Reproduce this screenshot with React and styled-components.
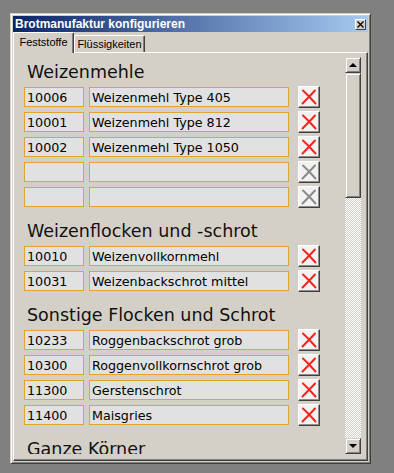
import React from "react";
import styled, { createGlobalStyle } from "styled-components";

const GlobalStyle = createGlobalStyle`
    html, body {
        margin: 0;
        padding: 0;
        background: #808080;
    }
    body {
        font-family: "Liberation Sans", Arial, sans-serif;
    }
`;

const face = "#d4d0c8";

const Window = styled.div`
    box-sizing: border-box;
    width: 361px;
    height: 451px;
    margin: 13px 0 0 10px;
    padding: 2px;
    background: ${face};
    border: 1px solid;
    border-color: ${face} #404040 #404040 ${face};
    box-shadow: inset 1px 1px #fff, inset -1px -1px #808080;
    display: flex;
    flex-direction: column;
`;

const TitleBar = styled.div`
    height: 16px;
    flex: none;
    display: flex;
    align-items: center;
    justify-content: space-between;
    padding: 0 2px 0 2px;
    background: linear-gradient(to right, #0a246a, #a6caf0);
`;

const Title = styled.span`
    color: #fff;
    font-family: "Liberation Sans", Arial, sans-serif;
    font-weight: bold;
    font-size: 12px;
    line-height: 16px;
    white-space: nowrap;
`;

const CloseButton = styled.button`
    box-sizing: border-box;
    width: 11px;
    height: 11px;
    padding: 0;
    display: flex;
    align-items: center;
    justify-content: center;
    background: ${face};
    border: 1px solid;
    border-color: #fff #404040 #404040 #fff;
`;

const TabStrip = styled.div`
    height: 20px;
    flex: none;
    display: flex;
    align-items: flex-end;
`;

const Tab = styled.div`
    box-sizing: border-box;
    height: ${({ active }) => (active ? "21px" : "17px")};
    width: ${({ active }) => (active ? "61px" : "71px")};
    margin-bottom: ${({ active }) => (active ? "-1px" : "0")};
    position: relative;
    z-index: ${({ active }) => (active ? 1 : 0)};
    background: ${face};
    border-top: 1px solid #fff;
    border-left: 1px solid #fff;
    border-right: 1px solid #404040;
    border-radius: 2px 2px 0 0;
    box-shadow: inset -1px 0 #808080;
    display: flex;
    align-items: center;
    justify-content: center;
    padding-bottom: ${({ active }) => (active ? "2px" : "0")};
    font-family: "Liberation Sans", Arial, sans-serif;
    font-size: 11px;
    color: #000;
    white-space: nowrap;
`;

const Panel = styled.div`
    box-sizing: border-box;
    flex: 1;
    min-height: 0;
    padding: 4px 6px 6px 4px;
    background: ${face};
    border: 1px solid;
    border-color: #fff #404040 #404040 #fff;
    box-shadow: inset -1px -1px #808080;
    display: flex;
`;

const ScrollContent = styled.div`
    flex: 1;
    overflow: hidden;
    padding: 3px 0 0 6px;
`;

const Section = styled.section`
    margin-bottom: 12px;
`;

const Heading = styled.h2`
    margin: 0 0 3px 3px;
    height: 24px;
    line-height: 24px;
    font-family: "DejaVu Sans", Verdana, sans-serif;
    font-weight: normal;
    font-size: 17.5px;
    color: #111;
    white-space: nowrap;
`;

const Rows = styled.div`
    display: flex;
    flex-direction: column;
    gap: 5px;
`;

const Row = styled.div`
    display: flex;
    align-items: center;
    height: 20px;
`;

const Field = styled.input`
    box-sizing: border-box;
    width: ${({ wide }) => (wide ? "200px" : "60px")};
    margin-right: ${({ wide }) => (wide ? "9px" : "5px")};
    height: 20px;
    padding: 0 2px;
    border: 1px solid #e0a530;
    background: #e1e1e1;
    font-family: "DejaVu Sans", Verdana, sans-serif;
    font-size: 12.7px;
    color: #000;
    outline: none;
`;

const DeleteButton = styled.button`
    box-sizing: border-box;
    width: 22px;
    height: 22px;
    padding: 0 1px 1px 0;
    display: flex;
    align-items: center;
    justify-content: center;
    background: #f2f2f2;
    border: 1px solid;
    border-color: #fff #404040 #404040 #fff;
    box-shadow: inset -1px -1px #8c8c8c;
`;

const ScrollBar = styled.div`
    width: 16px;
    flex: none;
    display: flex;
    flex-direction: column;
`;

const ScrollButton = styled.div`
    box-sizing: border-box;
    width: 16px;
    height: ${({ thumb }) => (thumb ? "125px" : "16px")};
    flex: none;
    background: ${face};
    border: 1px solid;
    border-color: ${face} #404040 #404040 ${face};
    box-shadow: inset 1px 1px #fff, inset -1px -1px #808080;
    display: flex;
    align-items: center;
    justify-content: center;
`;

const Track = styled.div`
    flex: 1;
    background: repeating-conic-gradient(#fff 0 25%, ${face} 0 50%) 0 0 / 2px 2px;
`;

const Arrow = styled.span`
    width: 0;
    height: 0;
    border-left: 4px solid transparent;
    border-right: 4px solid transparent;
    ${({ down }) =>
        down ? "border-top: 4px solid #000;" : "border-bottom: 4px solid #000;"}
`;

const XIcon = ({ color }) => (
    <svg width="16" height="16" viewBox="0 0 16 16">
        <path
            d="M2 1.5 Q8.5 7.5 14.5 14.5 M14 1.5 Q7.5 8.5 1.5 14.5"
            stroke={color}
            strokeWidth="2"
            fill="none"
            strokeLinecap="round"
        />
    </svg>
);

const sections = [
    {
        title: "Weizenmehle",
        items: [
            ["10006", "Weizenmehl Type 405"],
            ["10001", "Weizenmehl Type 812"],
            ["10002", "Weizenmehl Type 1050"],
            ["", ""],
            ["", ""],
        ],
    },
    {
        title: "Weizenflocken und -schrot",
        items: [
            ["10010", "Weizenvollkornmehl"],
            ["10031", "Weizenbackschrot mittel"],
        ],
    },
    {
        title: "Sonstige Flocken und Schrot",
        items: [
            ["10233", "Roggenbackschrot grob"],
            ["10300", "Roggenvollkornschrot grob"],
            ["11300", "Gerstenschrot"],
            ["11400", "Maisgries"],
        ],
    },
    {
        title: "Ganze Körner",
        items: [
            ["", ""],
            ["", ""],
        ],
    },
];

const App = () => {
    return (
        <>
            <GlobalStyle />
            <Window>
                <TitleBar>
                    <Title>Brotmanufaktur konfigurieren</Title>
                    <CloseButton aria-label="Schließen">
                        <svg width="7" height="7" viewBox="0 0 7 7">
                            <path
                                d="M0.5 0.5 L6.5 6.5 M6.5 0.5 L0.5 6.5"
                                stroke="#000"
                                strokeWidth="1.3"
                            />
                        </svg>
                    </CloseButton>
                </TitleBar>
                <TabStrip>
                    <Tab active>Feststoffe</Tab>
                    <Tab>Flüssigkeiten</Tab>
                </TabStrip>
                <Panel>
                    <ScrollContent>
                        {sections.map((section) => (
                            <Section key={section.title}>
                                <Heading>{section.title}</Heading>
                                <Rows>
                                    {section.items.map(([code, name], i) => (
                                        <Row key={i}>
                                            <Field readOnly value={code} />
                                            <Field wide readOnly value={name} />
                                            <DeleteButton>
                                                <XIcon
                                                    color={
                                                        code
                                                            ? "#f5241e"
                                                            : "#8a8a8a"
                                                    }
                                                />
                                            </DeleteButton>
                                        </Row>
                                    ))}
                                </Rows>
                            </Section>
                        ))}
                    </ScrollContent>
                    <ScrollBar>
                        <ScrollButton>
                            <Arrow />
                        </ScrollButton>
                        <ScrollButton thumb />
                        <Track />
                        <ScrollButton>
                            <Arrow down />
                        </ScrollButton>
                    </ScrollBar>
                </Panel>
            </Window>
        </>
    );
};

export default App;
